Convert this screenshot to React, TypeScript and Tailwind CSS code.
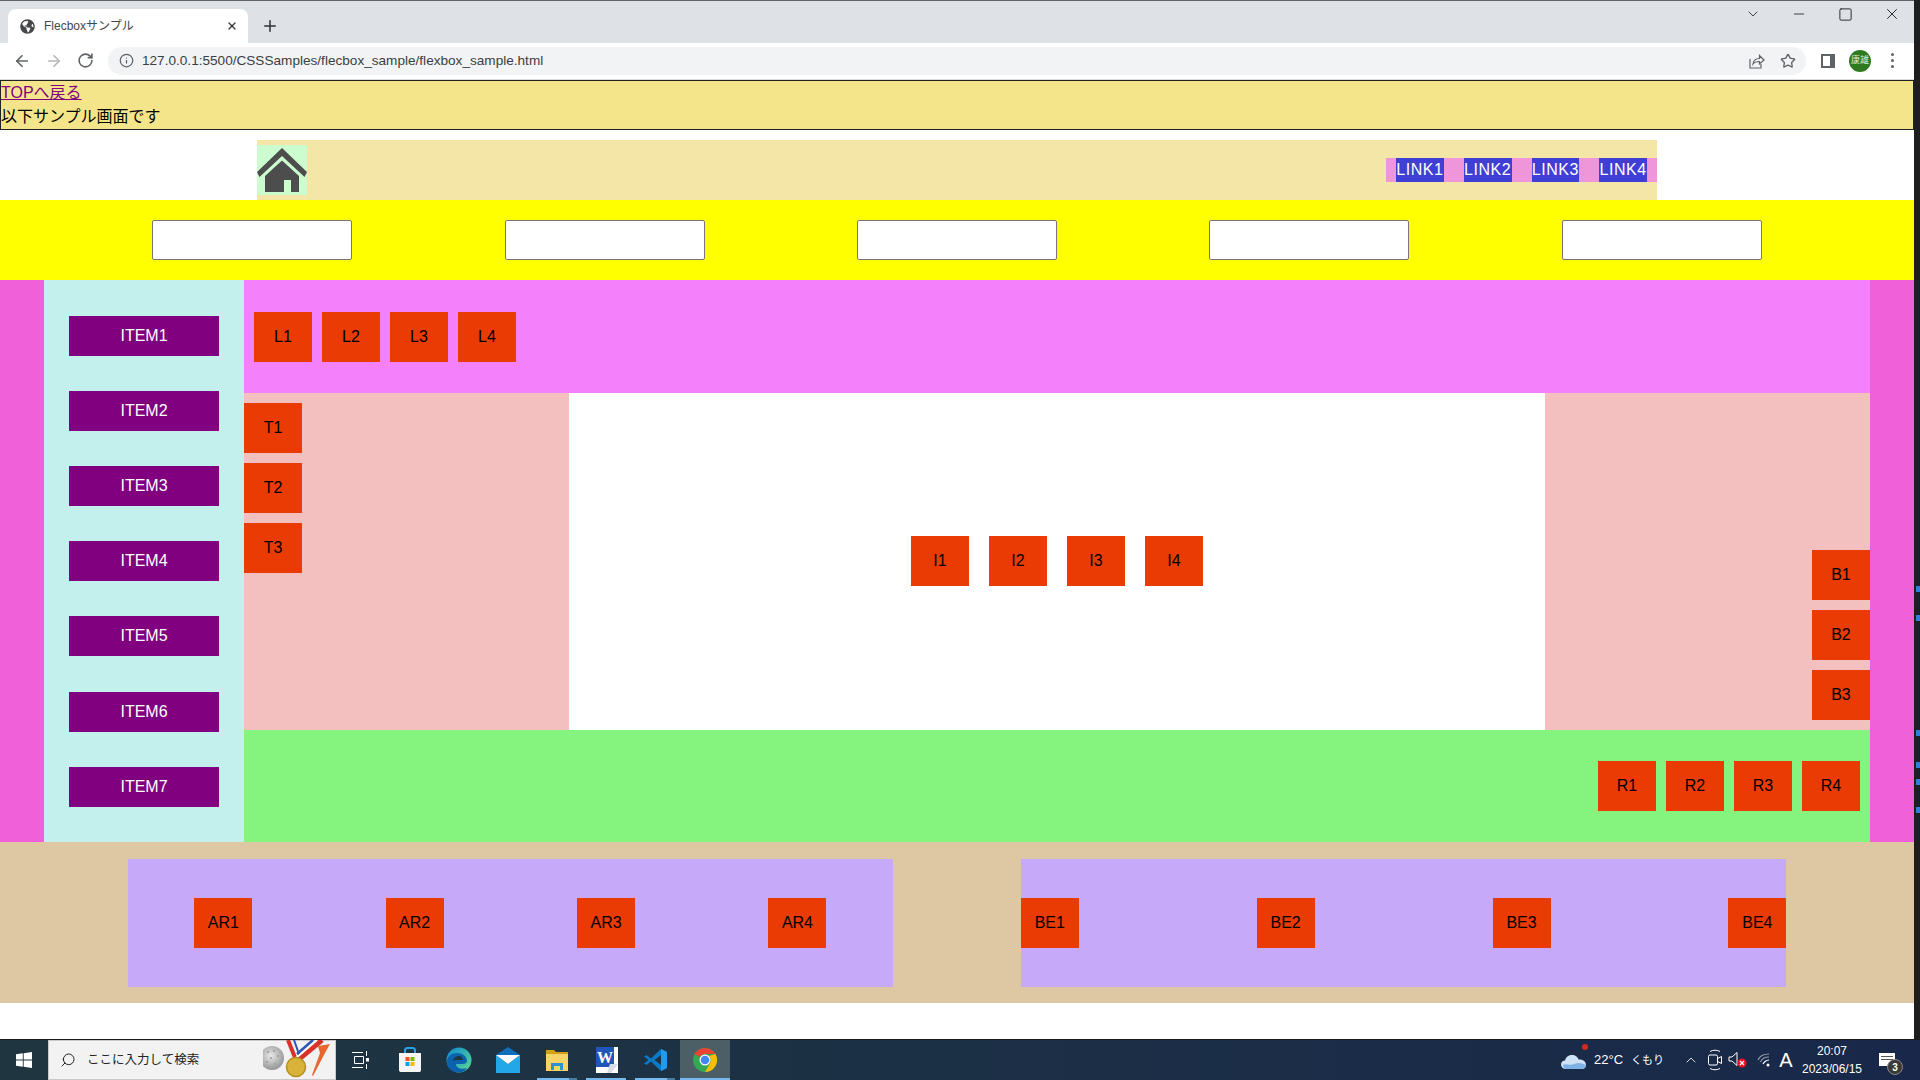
import React from "react";
import { ArrowLeft, ArrowRight, ChevronDown, ChevronUp, Info, Minus, Plus, RotateCw, Search, Square, Star, X } from "lucide-react";
import { FaGlobeAmericas } from "react-icons/fa";

const items = ["ITEM1", "ITEM2", "ITEM3", "ITEM4", "ITEM5", "ITEM6", "ITEM7"];
const scrollMarks = [586, 615, 730, 762, 779, 807];

const Box: React.FC<{ label: string }> = ({ label }) => (
  <div className="flex h-[50px] w-[58px] shrink-0 items-center justify-center bg-[#ea3b04] text-black">{label}</div>
);

const HomeIcon = () => (
  <svg viewBox="0 0 50 50" className="h-[50px] w-[50px]" fill="#4d4d4d">
    <path d="M25 3 50 27 47.500 32 25 11 2.500 32 0 27Z" />
    <path d="M25 15.500 42 31V47H34V35H27V47H8V31Z" />
  </svg>
);

const ShareIcon = () => (
  <svg viewBox="0 0 18 18" className="h-[18px] w-[18px]" fill="none" stroke="#5f6368" strokeWidth="1.200">
    <path d="M3 7v9h11v-4" />
    <path d="M6 12c.5-4 3.500-5.500 6.500-5.500V3.500L17 8l-4.500 4V9.500C10 9.500 7.500 10 6 12Z" />
  </svg>
);

const WindowsLogo = () => (
  <svg viewBox="0 0 16 16" className="h-4 w-4" fill="#fff">
    <path d="M0 2.300 6.800 1.300V7.600H0ZM7.700 1.200 16 0V7.600H7.700ZM0 8.400H6.800V14.700L0 13.700ZM7.700 8.400H16V16L7.700 14.800Z" />
  </svg>
);

const SearchBadge = () => (
  <svg viewBox="0 0 72 40" className="h-10 w-[72px]">
    <defs>
      <radialGradient id="ball" cx="45%" cy="40%" r="65%">
        <stop offset="0" stopColor="#e8e8e8" />
        <stop offset="1" stopColor="#8f8f8f" />
      </radialGradient>
    </defs>
    <circle cx="9" cy="18" r="12" fill="url(#ball)" />
    <g fill="#9a9a9a">
      <circle cx="5" cy="12" r="1" />
      <circle cx="11" cy="11" r="1" />
      <circle cx="15" cy="16" r="1" />
      <circle cx="8" cy="18" r="1" />
      <circle cx="4" cy="22" r="1" />
      <circle cx="12" cy="24" r="1" />
    </g>
    <path d="M25 0 33 20" stroke="#d8322a" strokeWidth="4" />
    <path d="M31 0 37 17" stroke="#2d55b5" strokeWidth="2" />
    <path d="M59 0 35 20" stroke="#d8322a" strokeWidth="5" />
    <path d="M54 0 33 18" stroke="#fff" strokeWidth="2" />
    <path d="M50 0 34 14" stroke="#2d55b5" strokeWidth="2.500" />
    <circle cx="33" cy="27" r="9.500" fill="#d9b23a" stroke="#b68f20" strokeWidth="1.500" />
    <path d="M55 6 67 4 62 13 50 36 49 35 57 13Z" fill="#e8672e" />
  </svg>
);

const TaskViewIcon = () => (
  <svg viewBox="0 0 18 18" className="h-[18px] w-[18px]" fill="none" stroke="#fff" strokeWidth="1">
    <path d="M0 1.500H11M0 16.500H11M2.500 5.500H11.500V12.500H2.500ZM14.500 0V5M14.500 13V18" />
    <rect x="14" y="7" width="3" height="3.500" fill="#fff" stroke="none" />
  </svg>
);

const StoreIcon = () => (
  <svg viewBox="0 0 24 26" className="h-[26px] w-6">
    <path d="M7 7V3.500C7 2 8 1 9.500 1H14.500C16 1 17 2 17 3.500V7" fill="none" stroke="#27a3e3" strokeWidth="2" />
    <path d="M1 6H23V23C23 24.500 22 25 21 25H3C2 25 1 24.500 1 23Z" fill="#f5f5f5" />
    <rect x="7.500" y="10" width="4" height="4" fill="#f25022" />
    <rect x="12.500" y="10" width="4" height="4" fill="#7fba00" />
    <rect x="7.500" y="15" width="4" height="4" fill="#00a4ef" />
    <rect x="12.500" y="15" width="4" height="4" fill="#ffb900" />
  </svg>
);

const EdgeIcon = () => (
  <svg viewBox="0 0 26 26" className="h-[26px] w-[26px]">
    <defs>
      <linearGradient id="edgeTop" x1="0" y1="0" x2="1" y2="1">
        <stop offset="0" stopColor="#0c8ad6" />
        <stop offset="1" stopColor="#5fdc8a" />
      </linearGradient>
    </defs>
    <circle cx="13" cy="13" r="12.500" fill="url(#edgeTop)" />
    <path d="M1 15C1 9 6 6 11 6 16 6 21 9 21 14 21 16 19 17 16 17H10C10 21 15 23 21 21 19 24 16 25.500 13 25.500 6 25.500 1 21 1 15Z" fill="#0b62ae" />
    <path d="M7 14C8 10 11 9 13 9 15.500 9 17 11 17 13H10C9 13 8 13.500 7 14Z" fill="#1f3640" />
  </svg>
);

const MailIcon = () => (
  <svg viewBox="0 0 26 28" className="h-7 w-[26px]">
    <path d="M13 1 25 9H1Z" fill="#0f6fb8" />
    <path d="M1 9 13 18 25 9V27H1Z" fill="#22a7e8" />
    <path d="M1 9 13 18 25 9" fill="#fff" />
  </svg>
);

const FolderIcon = () => (
  <svg viewBox="0 0 24 24" className="h-6 w-6">
    <path d="M1 2H9L11 4H23V7H1Z" fill="#d69f16" />
    <rect x="1" y="6" width="22" height="17" fill="#f7d368" />
    <path d="M6 22V15H18V22H15V18H9V22Z" fill="#2f8fd0" />
  </svg>
);

const WordIcon = () => (
  <svg viewBox="0 0 24 28" className="h-7 w-6">
    <rect x="1" y="1" width="22" height="26" fill="#fff" />
    <rect x="1" y="1" width="18" height="20" fill="#1f56b8" />
    <path d="M15 18H23L16 27H12Z" fill="#d9dde6" />
    <text x="2" y="17" fontSize="16" fontWeight="700" fill="#fff" fontFamily="Liberation Serif, serif">W</text>
  </svg>
);

const VsCodeIcon = () => (
  <svg viewBox="0 0 24 24" className="h-6 w-6">
    <path d="M17 1 23 4V20L17 23 7 13.500 2.500 17 0 15.500 4.500 12 0 8.500 2.500 7 7 10.500ZM17 7 10.500 12 17 17Z" fill="#0a7ac4" />
    <path d="M17 1 23 4V20L17 23Z" fill="#1f9cf0" />
  </svg>
);

const ChromeIcon = () => (
  <svg viewBox="0 0 24 24" className="h-6 w-6">
    <circle cx="12" cy="12" r="12" fill="#34a853" />
    <path d="M12 0A12 12 0 0 1 22.400 6H12A6 6 0 0 0 6.800 9L1.600 6A12 12 0 0 1 12 0Z" fill="#ea4335" />
    <path d="M22.400 6A12 12 0 0 1 12 24L17.200 15A6 6 0 0 0 16 8Z" fill="#fbbc05" />
    <circle cx="12" cy="12" r="5.500" fill="#fff" />
    <circle cx="12" cy="12" r="4.300" fill="#4285f4" />
  </svg>
);

const CloudIcon = () => (
  <svg viewBox="0 0 26 20" className="h-5 w-[26px]">
    <path d="M5 19C2 19 0 17 0 14.500 0 12 2 10.500 4 10.500 5 6.500 8 5 11 5 14 5 17 7 17.500 9.500 22 9 25 11.500 25 15 25 17.500 23 19 21 19Z" fill="#cfe3f7" />
    <path d="M2 15C6 13 9 16 13 14 17 12 21 13 25 15 25 17.500 23 19 21 19H5C3.500 19 2 17 2 15Z" fill="#7fb2e6" />
  </svg>
);

const MeetIcon = () => (
  <svg viewBox="0 0 16 22" className="h-[22px] w-4" fill="none" stroke="#fff" strokeWidth="1">
    <path d="M3 2.500C6 .8 10 .8 13 2.500M3 19.500C6 21.200 10 21.200 13 19.500" />
    <rect x="1.500" y="6" width="9" height="10" rx="1.500" />
    <path d="M10.500 9.500 14.500 7.500V14.500L10.500 12.500" />
  </svg>
);

const SpeakerIcon = () => (
  <svg viewBox="0 0 22 18" className="h-[18px] w-[22px]">
    <path d="M1 6H4L9 1.500V14.500L4 10H1Z" fill="none" stroke="#fff" strokeWidth="1" />
    <circle cx="14" cy="12" r="4.500" fill="#e81123" />
    <path d="M12 10 16 14M16 10 12 14" stroke="#fff" strokeWidth="1.200" />
  </svg>
);

const WifiIcon = () => (
  <svg viewBox="0 0 14 14" className="h-3.5 w-3.5" fill="none" strokeWidth="1.200">
    <path d="M1 7C2.500 3.500 6 1 12 1M3.500 9C4.500 6.500 7.500 4 12 4" stroke="#8f9aa8" />
    <path d="M6 11C6.500 9.500 9 7 12 7" stroke="#fff" />
    <circle cx="11" cy="12" r="1.500" fill="#fff" stroke="none" />
  </svg>
);

const BrowserChrome = () => (
  <>
    <div className="flex h-[43px] items-end border-t border-[#5f6368] bg-[#dee1e6] pl-2">
      <div className="flex h-[34px] w-[240px] items-center rounded-t-lg bg-white pl-3 text-[12px] text-[#45474a]">
        <FaGlobeAmericas className="h-[15px] w-[15px] text-[#45474a]" />
        <span className="ml-[9px]">Flecboxサンプル</span>
        <X className="ml-auto mr-[10px] h-3 w-3 text-[#303134]" strokeWidth={2.500} />
      </div>
      <Plus className="mb-[8px] ml-[13px] h-[18px] w-[18px] text-[#303134]" strokeWidth={2} />
      <div className="mb-[20px] ml-auto flex items-center text-[#222]">
        <ChevronDown className="mr-[30px] h-4 w-4" strokeWidth={1.250} />
        <Minus className="mr-[31px] h-4 w-4" strokeWidth={1.250} />
        <Square className="mr-[30px] h-[15px] w-[15px]" strokeWidth={1.500} />
        <X className="mr-[13px] h-[18px] w-[18px]" strokeWidth={1.250} />
      </div>
    </div>
    <div className="flex h-[37px] items-center border-b border-[#dadce0] bg-white pb-[1px]">
      <ArrowLeft className="ml-[13px] h-[18px] w-[18px] text-[#5f6368]" strokeWidth={2.250} />
      <ArrowRight className="ml-[14px] h-[18px] w-[18px] text-[#b5b7ba]" strokeWidth={2.250} />
      <RotateCw className="ml-[14px] h-[17px] w-[17px] text-[#5f6368]" strokeWidth={2.250} />
      <div className="ml-[14px] flex h-7 w-[1698px] items-center rounded-full bg-[#f1f3f4] pl-[11px] text-[13.600px] text-[#3c4043]">
        <Info className="h-[15px] w-[15px] text-[#5f6368]" strokeWidth={2} />
        <span className="ml-[8px] pt-[2px]">127.0.0.1:5500/CSSSamples/flecbox_sample/flexbox_sample.html</span>
        <div className="ml-auto mr-[9px] flex items-center">
          <ShareIcon />
          <Star className="ml-[15px] mr-[1px] h-4 w-4 text-[#5f6368]" strokeWidth={2} />
        </div>
      </div>
      <div className="ml-[15px] flex h-[14px] w-[14px] justify-start border-[2px] border-r-[5px] border-[#5f6368] bg-white" />
      <div className="ml-[14px] flex h-[22px] w-[22px] items-center justify-center rounded-full bg-[#2f7a1f] text-[9px] text-[#dcebd8]">康雄</div>
      <div className="ml-[20px] flex flex-col gap-[3px]">
        <span className="h-[3px] w-[3px] rounded-full bg-[#5f6368]" />
        <span className="h-[3px] w-[3px] rounded-full bg-[#5f6368]" />
        <span className="h-[3px] w-[3px] rounded-full bg-[#5f6368]" />
      </div>
    </div>
  </>
);

const SamplePage = () => (
  <div className="text-[16px] leading-6">
    <div className="h-[50px] border border-[#222] bg-[#f5e58a] text-black">
      <a href="#" className="block w-fit text-[#800080] underline">TOPへ戻る</a>
      <p>以下サンプル画面です</p>
    </div>

    {/* header */}
    <div className="mx-auto mt-[10px] flex h-[60px] w-[1400px] items-center justify-between bg-[#f3e6a6]">
      <div className="h-[50px] w-[50px] bg-[#ccfdcf]">
        <HomeIcon />
      </div>
      <div className="flex gap-[20px] bg-[#ef95da] px-[10px]">
        {["LINK1", "LINK2", "LINK3", "LINK4"].map((l) => (
          <a key={l} className="w-[47.750px] bg-[#3f3fd6] text-center tracking-[0.6px] text-white">{l}</a>
        ))}
      </div>
    </div>

    {/* inputs */}
    <div className="flex h-[80px] items-center justify-evenly bg-[#ffff00]">
      {[1, 2, 3, 4, 5].map((n) => (
        <input key={n} className="h-10 w-[200px] rounded-[2px] border border-[#767676] bg-white" />
      ))}
    </div>

    {/* flex samples */}
    <div className="flex h-[562px] bg-[#f060d8] px-[44px]">
      <div className="flex w-[200px] shrink-0 flex-col items-center justify-evenly bg-[#c3efed] pt-[0.5px]">
        {items.map((item) => (
          <div key={item} className="flex h-10 w-[150px] items-center justify-center bg-[#800080] text-white">{item}</div>
        ))}
      </div>
      <div className="flex flex-1 flex-col">
        <div className="flex h-[113px] items-center gap-[10px] bg-[#f480fb] pl-[10px]">
          {["L1", "L2", "L3", "L4"].map((l) => <Box key={l} label={l} />)}
        </div>
        <div className="flex h-[337px]">
          <div className="flex w-1/5 flex-col items-start gap-[10px] bg-[#f3bfbf] pt-[10px]">
            {["T1", "T2", "T3"].map((l) => <Box key={l} label={l} />)}
          </div>
          <div className="flex w-3/5 items-center justify-center gap-[20px] bg-white pb-[1px]">
            {["I1", "I2", "I3", "I4"].map((l) => <Box key={l} label={l} />)}
          </div>
          <div className="flex w-1/5 flex-col items-end justify-end gap-[10px] bg-[#f3bfbf] pb-[10px]">
            {["B1", "B2", "B3"].map((l) => <Box key={l} label={l} />)}
          </div>
        </div>
        <div className="flex min-h-0 flex-1 items-center justify-end gap-[10px] bg-[#85f47e] pr-[10px]">
          {["R1", "R2", "R3", "R4"].map((l) => <Box key={l} label={l} />)}
        </div>
      </div>
    </div>

    {/* footer */}
    <div className="flex h-[161px] items-center justify-evenly bg-[#dec8a3]">
      <div className="flex h-[128px] w-2/5 items-center justify-around bg-[#c7a9fa]">
        {["AR1", "AR2", "AR3", "AR4"].map((l) => <Box key={l} label={l} />)}
      </div>
      <div className="flex h-[128px] w-2/5 items-center justify-between bg-[#c7a9fa]">
        {["BE1", "BE2", "BE3", "BE4"].map((l) => <Box key={l} label={l} />)}
      </div>
    </div>
  </div>
);

const TaskSlot: React.FC<{ children: React.ReactNode; open?: boolean; stacked?: boolean; active?: boolean }> = ({ children, open, stacked, active }) => (
  <div className={`relative flex h-10 w-[49.2px] items-center justify-center ${active ? "bg-[#4d5f66]" : ""}`}>
    {children}
    {open && (
      <div className={`absolute bottom-0 flex h-[2px] ${active ? "inset-x-0" : "left-[4px] w-10"}`}>
        <span className="flex-1 bg-[#76b9ed]" />
        {stacked && <span className="w-[8px] bg-[#4a7d9e]" />}
      </div>
    )}
  </div>
);

const Taskbar = () => (
  <div className="flex h-[41px] border-t border-[#1a1a1a] bg-linear-to-r from-[#1f3640] to-[#19284a] text-white">
    <div className="flex w-[48px] items-center justify-center">
      <WindowsLogo />
    </div>
    <div className="flex h-10 w-[288px] items-center border border-[#c9c9c9] bg-[#f2f2f2] pl-[11px] text-[#222]">
      <Search className="h-4 w-4 -scale-x-100 text-[#222]" strokeWidth={1.500} />
      <span className="ml-[11px] text-[12.500px]">ここに入力して検索</span>
      <div className="ml-auto">
        <SearchBadge />
      </div>
    </div>
    <TaskSlot><TaskViewIcon /></TaskSlot>
    <TaskSlot><StoreIcon /></TaskSlot>
    <TaskSlot><EdgeIcon /></TaskSlot>
    <TaskSlot><MailIcon /></TaskSlot>
    <TaskSlot open stacked><FolderIcon /></TaskSlot>
    <TaskSlot open><WordIcon /></TaskSlot>
    <TaskSlot open stacked><VsCodeIcon /></TaskSlot>
    <TaskSlot open active><ChromeIcon /></TaskSlot>

    <div className="ml-auto flex h-10 items-center text-[13px]">
      <div className="relative flex w-[32px] justify-center">
        <CloudIcon />
        <span className="absolute right-[2px] top-[-6px] h-[6px] w-[6px] rounded-full bg-[#d02a20]" />
      </div>
      <span className="ml-[4px] w-[28px] whitespace-nowrap">22°C</span>
      <span className="ml-[9px] w-[31px] whitespace-nowrap text-[11px]">くもり</span>
      <div className="ml-[17px] flex w-[24px] justify-center">
        <ChevronUp className="h-4 w-4" strokeWidth={1.250} />
      </div>
      <div className="flex w-[24px] justify-center"><MeetIcon /></div>
      <div className="flex w-[24px] justify-center"><SpeakerIcon /></div>
      <div className="flex w-[25px] justify-center"><WifiIcon /></div>
      <div className="w-[20px] text-center text-[20px]">A</div>
      <div className="flex w-[72px] flex-col items-center text-[12px] leading-[18px]">
        <span>20:07</span>
        <span>2023/06/15</span>
      </div>
      <div className="relative h-10 w-[52px] pl-[11px] pt-[13px]">
        <div className="flex h-[13px] w-4 flex-col gap-[2px] bg-white px-[2px] pt-[3px]">
          <span className="h-[1px] w-full bg-[#555]" />
          <span className="h-[1px] w-full bg-[#555]" />
        </div>
        <span className="absolute left-[19px] top-[19px] flex h-4 w-4 items-center justify-center rounded-full border border-[#888] bg-[#3a3a3a] text-[10px] font-bold">3</span>
      </div>
    </div>
  </div>
);

export default function App() {
  return (
    <div className="flex h-screen w-screen flex-col overflow-hidden bg-white font-['Liberation_Sans','Noto_Sans_CJK_JP',sans-serif]">
      <div className="flex min-h-0 flex-1">
        <div className="min-w-0 flex-1">
          <BrowserChrome />
          <SamplePage />
        </div>
        {/* editor behind the browser window */}
        <div className="relative w-[6px] shrink-0 bg-[#1e1e1e]">
          {scrollMarks.map((top) => (
            <span key={top} className="absolute right-0 h-[6px] w-[4px] bg-[#2f80d8]" style={{ top }} />
          ))}
        </div>
      </div>
      <Taskbar />
    </div>
  );
}
